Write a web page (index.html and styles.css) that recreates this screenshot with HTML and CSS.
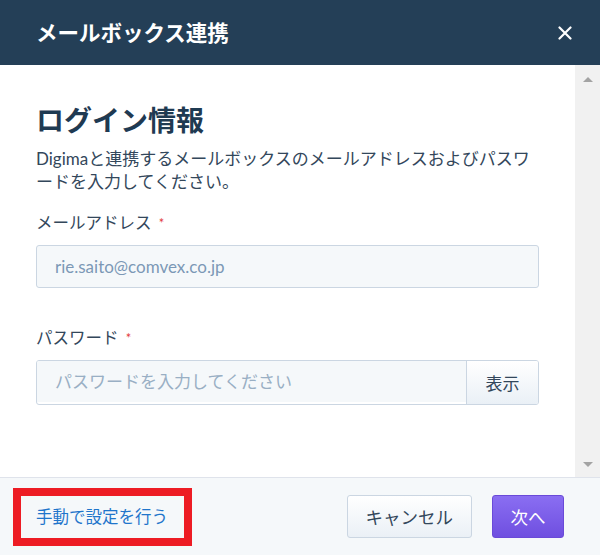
FILE: index.html
```html
<!DOCTYPE html>
<html lang="ja">
<head>
    <meta charset="UTF-8">
    <meta name="viewport" content="width=device-width, initial-scale=1.0">
    <title>メールボックス連携</title>
    <link rel="stylesheet" href="styles.css">
</head>
<body>
    <div class="modal">
        <header class="modal-header">
            <h1>メールボックス連携</h1>
            <button class="close-btn" aria-label="閉じる">
                <svg width="14" height="14" viewBox="0 0 14 14">
                    <path d="M1.5 1.5 L12.5 12.5 M12.5 1.5 L1.5 12.5" stroke="#ffffff" stroke-width="2.2" stroke-linecap="round"/>
                </svg>
            </button>
        </header>

        <div class="modal-main">
            <section class="modal-body">
                <h2>ログイン情報</h2>
                <p class="lead">Digimaと連携するメールボックスのメールアドレスおよびパスワードを入力してください。</p>

                <label class="field-label" for="email">メールアドレス <span class="req">*</span></label>
                <input class="text-input" id="email" type="text" value="rie.saito@comvex.co.jp" readonly>

                <label class="field-label pw-label" for="password">パスワード <span class="req">*</span></label>
                <div class="input-group">
                    <input class="text-input" id="password" type="password" placeholder="パスワードを入力してください">
                    <button class="show-btn">表示</button>
                </div>
            </section>
            <div class="scrollbar">
                <span class="arrow arrow-up"></span>
                <span class="arrow arrow-down"></span>
            </div>
        </div>

        <footer class="modal-footer">
            <a class="manual-link" href="#">手動で設定を行う</a>
            <div class="actions">
                <button class="btn">キャンセル</button>
                <button class="btn btn-primary">次へ</button>
            </div>
        </footer>
    </div>
</body>
</html>
```

FILE: styles.css
```css
body {
    font-family: Lato, "Noto Sans CJK JP", sans-serif;
    color: #33475b;
    margin: 0;
    padding: 0;
    background-color: #ffffff;
}

.modal {
    width: 600px;
    height: 555px;
    display: flex;
    flex-direction: column;
    overflow: hidden;
}

.modal-header {
    height: 65px;
    flex-shrink: 0;
    background-color: #243f57;
    display: flex;
    align-items: center;
    justify-content: space-between;
    padding: 0 28px 0 36px;
}

.modal-header h1 {
    margin: 0;
    color: #ffffff;
    font-size: 21.5px;
    font-weight: bold;
    line-height: 30px;
}

.close-btn {
    background: transparent;
    border: none;
    padding: 0;
    width: 14px;
    height: 14px;
    cursor: pointer;
    display: flex;
}

.modal-main {
    height: 412px;
    display: flex;
}

.modal-body {
    flex: 1;
    padding: 38px 36px 0 36px;
}

.modal-body h2 {
    margin: 0;
    font-size: 28px;
    line-height: 34px;
    font-weight: bold;
    color: #1f3a52;
}

.lead {
    margin: 10px 0 0 0;
    font-size: 17px;
    line-height: 23px;
}

.field-label {
    display: block;
    margin-top: 18px;
    font-size: 16.5px;
    line-height: 24px;
}

.pw-label {
    margin-top: 38px;
}

.req {
    color: #e23a3a;
    font-size: 13px;
    vertical-align: top;
    margin-left: 3px;
}

.text-input {
    display: block;
    box-sizing: border-box;
    width: 100%;
    height: 43px;
    margin-top: 10px;
    padding: 0 18px;
    border: 1px solid #cbd6e2;
    border-radius: 3px;
    background-color: #f5f8fa;
    font-family: Lato, "Noto Sans CJK JP", sans-serif;
    font-size: 17px;
    color: #7c98b6;
    outline: none;
}

.text-input::placeholder {
    color: #99afc4;
}

.input-group {
    display: flex;
    margin-top: 10px;
    height: 43px;
    border: 1px solid #cbd6e2;
    border-radius: 3px;
    overflow: hidden;
}

.input-group .text-input {
    flex: 1;
    margin: 0;
    height: 41px;
    border: none;
    border-radius: 0;
}

.show-btn {
    width: 72px;
    border: none;
    border-left: 1px solid #cbd6e2;
    background: linear-gradient(#ffffff, #eaf0f6);
    font-family: Lato, "Noto Sans CJK JP", sans-serif;
    font-size: 17px;
    color: #33475b;
    cursor: pointer;
}

.scrollbar {
    width: 25px;
    background-color: #f1f1f1;
    display: flex;
    flex-direction: column;
    justify-content: space-between;
    align-items: center;
    padding: 12px 0 10px 0;
}

.arrow {
    width: 0;
    height: 0;
    border-left: 5px solid transparent;
    border-right: 5px solid transparent;
}

.arrow-up {
    border-bottom: 5px solid #a3a3a3;
}

.arrow-down {
    border-top: 5px solid #a3a3a3;
}

.modal-footer {
    flex: 1;
    background-color: #f5f8fa;
    border-top: 1px solid #dfe3eb;
    display: flex;
    align-items: center;
    justify-content: space-between;
    padding: 0 36px 0 13px;
}

.manual-link {
    border: 8px solid #ed1c24;
    padding: 0 16px 0 15px;
    height: 42px;
    line-height: 42px;
    color: #1f75cb;
    font-size: 16.5px;
    text-decoration: none;
}

.actions {
    display: flex;
    gap: 20px;
}

.btn {
    height: 43px;
    padding: 0 18px;
    border: 1px solid #cbd6e2;
    border-radius: 3px;
    background: linear-gradient(#ffffff, #eaf0f6);
    font-family: Lato, "Noto Sans CJK JP", sans-serif;
    font-size: 17.5px;
    color: #33475b;
    cursor: pointer;
}

.btn-primary {
    width: 72px;
    padding: 0;
    border-color: #6a4ad8;
    background: linear-gradient(#8a6ef2, #6f4fe0);
    color: #ffffff;
}
```
